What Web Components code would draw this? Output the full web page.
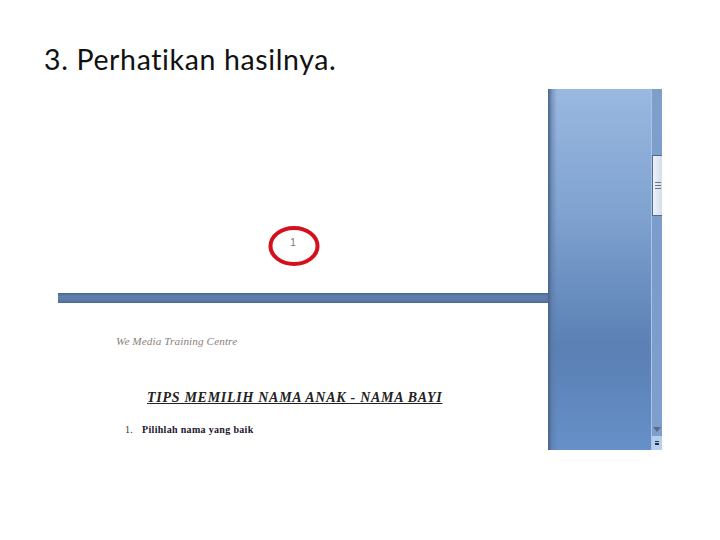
<!DOCTYPE html>
<html>
<head>
<meta charset="utf-8">
<title>Perhatikan hasilnya</title>
<style>
  html, body { margin: 0; padding: 0; background: #fff; }
</style>
</head>
<body>
<slide-view>
  <span slot="title">3. Perhatikan hasilnya.</span>
  <word-shot>
    <word-page-end slot="first" number="1"></word-page-end>
    <word-page slot="second">
      <span slot="header">We Media Training Centre</span>
      <span slot="heading">TIPS MEMILIH NAMA ANAK - NAMA BAYI</span>
      <span slot="item">Pilihlah nama yang baik</span>
    </word-page>
  </word-shot>
</slide-view>
<script>
class SlideView extends HTMLElement {
    constructor(){
        super();
        this.attachShadow({mode:"open"}).innerHTML = `
        <style>
        :host { display: block; width: 720px; height: 540px; background: #fff; overflow: hidden; }
        h1 {
            margin: 0;
            padding: 40px 0 0 44px;
            height: 49px;
            font: 400 28.5px/38px Lato, "Open Sans", sans-serif;
            color: #111;
            letter-spacing: 0.63px;
        }
        .body { padding-left: 58px; }
        </style>
        <h1><slot name="title"></slot></h1>
        <div class="body"><slot></slot></div>`;
    }
}

class WordShot extends HTMLElement {
    constructor(){
        super();
        this.attachShadow({mode:"open"}).innerHTML = `
        <style>
        :host { display: grid; grid-template-columns: 490px 103px 11px; width: 604px; height: 361px; }
        .pages { display: grid; grid-template-rows: 204px 10px 147px; background: #fff; }
        .gap {
            background: linear-gradient(#48648c, #5f80ad 30%, #5d7ca8 70%, #4c6994);
        }
        .side {
            background:
              linear-gradient(90deg, #4a6288, rgba(90,120,165,0.5) 4px, rgba(255,255,255,0) 9px),
              linear-gradient(#9ab8e0 0, #7fa2d0 35%, #6a8fc0 55%, #5a80b4 72%, #6690c8 100%);
        }
        </style>
        <div class="pages">
          <slot name="first"></slot>
          <div class="gap"></div>
          <slot name="second"></slot>
        </div>
        <div class="side"></div>
        <word-scrollbar></word-scrollbar>`;
    }
}

class WordPageEnd extends HTMLElement {
    constructor(){
        super();
        this.attachShadow({mode:"open"}).innerHTML = `
        <style>
        :host { display: flex; position: relative; height: 204px; justify-content: center; background: #fff; }
        .num {
            margin: 147px 20px 0 0;
            font: 400 10px/14px "Liberation Sans", sans-serif;
            color: #777;
        }
        svg { position: absolute; left: 209px; top: 135px; }
        </style>
        <span class="num">${this.getAttribute("number")}</span>
        <svg width="54" height="44" viewBox="0 0 54 44">
          <ellipse cx="27" cy="22" rx="23.5" ry="18" fill="none" stroke="#d4101c" stroke-width="4"/>
        </svg>`;
    }
}

class WordPage extends HTMLElement {
    constructor(){
        super();
        this.attachShadow({mode:"open"}).innerHTML = `
        <style>
        :host { display: block; height: 147px; overflow: hidden; background: #fff; font-family: "Liberation Serif", serif; }
        .head {
            padding: 31px 0 0 58px;
            height: 14px;
            font: italic 400 11.2px/14px "Liberation Serif", serif;
            letter-spacing: 0.1px;
            color: #8a8078;
        }
        h2 {
            margin: 42px 0 0 89px;
            font: italic 700 14px/16px "Liberation Serif", serif;
            letter-spacing: 0.72px;
            white-space: nowrap;
            text-decoration: underline;
            color: #222;
        }
        .row {
            display: flex;
            margin: 18px 0 0 67px;
            font: 700 10px/12px "Liberation Serif", serif;
            letter-spacing: 0.32px;
            color: #1c1530;
        }
        .row b { width: 17px; font-weight: 400; color: #333; }
        </style>
        <div class="head"><slot name="header"></slot></div>
        <h2><slot name="heading"></slot></h2>
        <div class="row"><b>1.</b><span><slot name="item"></slot></span></div>`;
    }
}

class WordScrollbar extends HTMLElement {
    constructor(){
        super();
        this.attachShadow({mode:"open"}).innerHTML = `
        <style>
        :host {
            display: flex;
            flex-direction: column;
            height: 361px;
            box-sizing: border-box;
            border-left: 1px solid #a9c5ea;
            background: linear-gradient(#7f9fcb, #7b9ccb 50%, #7f9fcb);
        }
        .space { height: 66px; }
        .thumb {
            display: flex;
            align-items: center;
            justify-content: flex-end;
            height: 61px;
            box-sizing: border-box;
            border: 1px solid #4d6a96;
            border-right: 0;
            background: linear-gradient(90deg, #eef2f8, #d5dde9);
        }
        .grip { width: 6px; height: 7px; margin-right: 1px; background: repeating-linear-gradient(#6d7484 0 1px, transparent 1px 3px); }
        .rest { flex: 1; display: flex; align-items: flex-end; justify-content: center; padding-bottom: 4px; }
        .arrow { width: 0; height: 0; border: 4px solid transparent; border-top: 5px solid #5a6a8c; border-bottom: 0; }
        .btn {
            display: flex;
            flex-direction: column;
            align-items: center;
            justify-content: center;
            gap: 1px;
            height: 14px;
            background: #b6cdec;
        }
        .btn i { display: block; width: 4px; height: 1px; background: #20304c; }
        .btn i + i { height: 2px; }
        </style>
        <div class="space"></div>
        <div class="thumb"><div class="grip"></div></div>
        <div class="rest"><div class="arrow"></div></div>
        <div class="btn"><i></i><i></i></div>`;
    }
}

customElements.define("slide-view", SlideView);
customElements.define("word-shot", WordShot);
customElements.define("word-page-end", WordPageEnd);
customElements.define("word-page", WordPage);
customElements.define("word-scrollbar", WordScrollbar);
</script>
</body>
</html>
